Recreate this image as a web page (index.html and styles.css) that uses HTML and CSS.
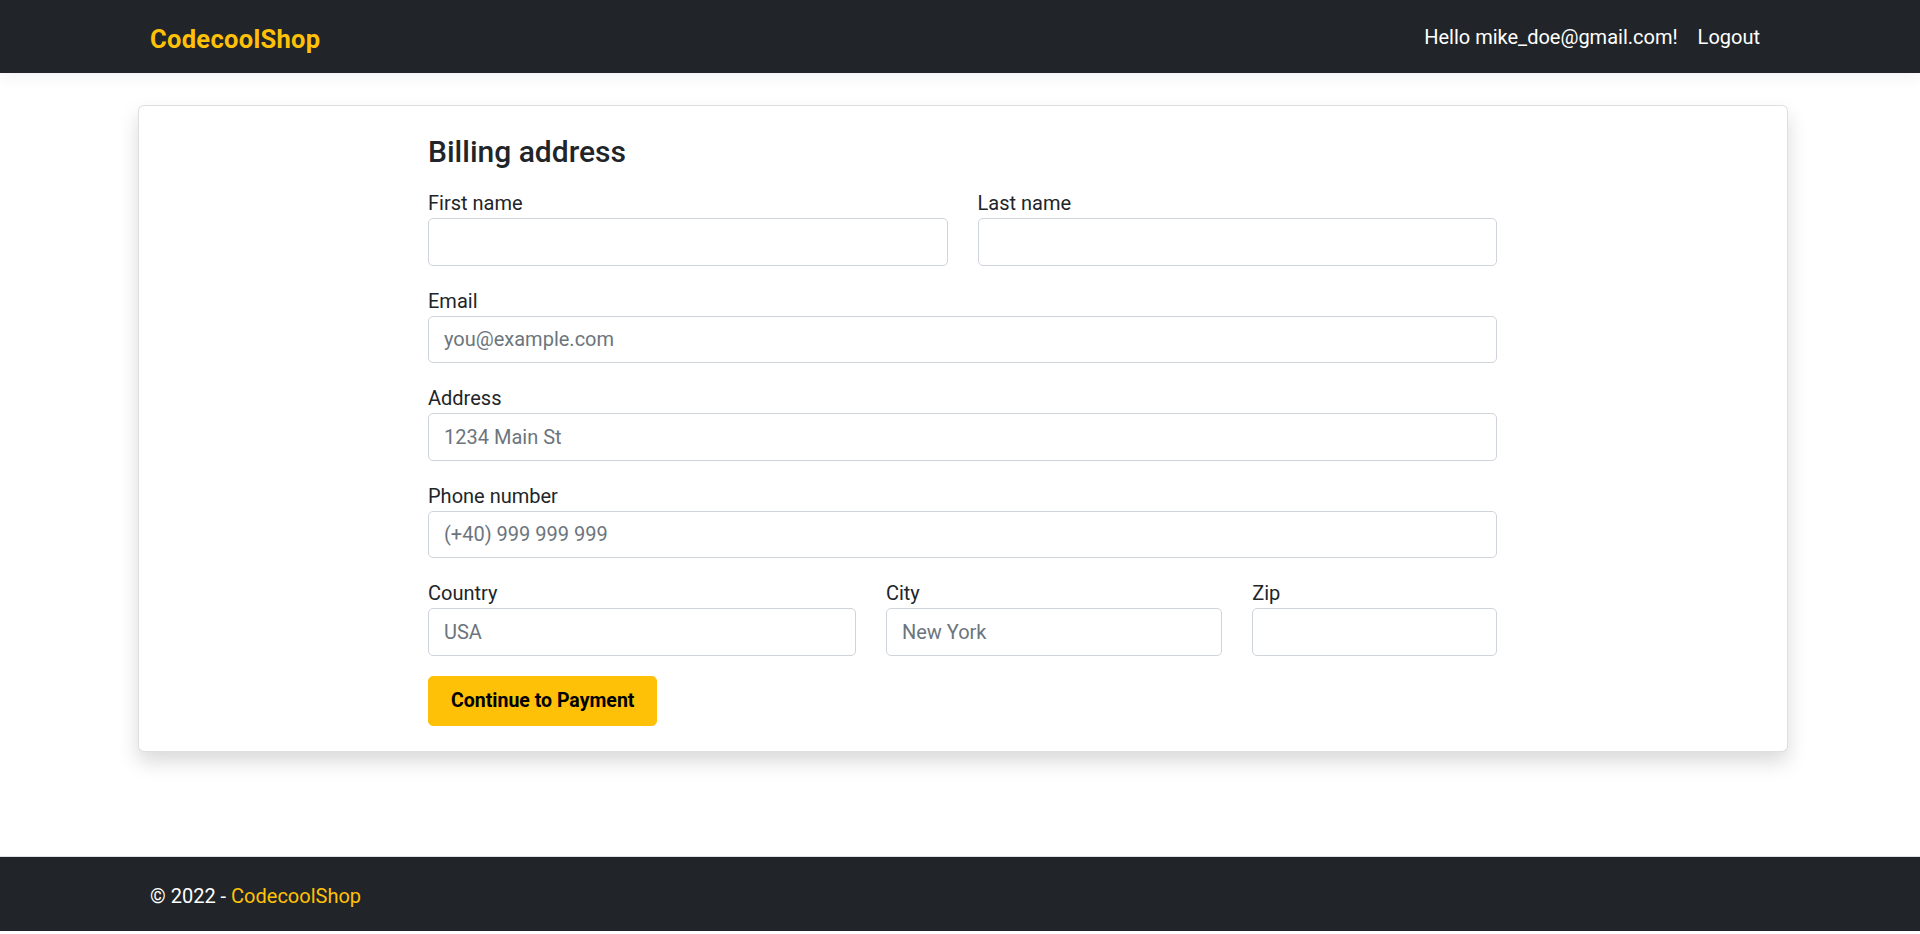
FILE: index.html
```html
<!DOCTYPE html>
<html lang="en">
<head>
<meta charset="utf-8">
<title>Checkout - CodecoolShop</title>
<link rel="stylesheet" href="styles.css">
</head>
<body>
<div class="page">
  <header class="navbar">
    <div class="nav-inner">
      <a class="brand" href="#">CodecoolShop</a>
      <nav class="nav-links">
        <span class="nav-link">Hello mike_doe@gmail.com!</span>
        <a class="nav-link" href="#">Logout</a>
      </nav>
    </div>
  </header>

  <main class="main">
    <div class="card">
      <form class="billing">
        <h4 class="title">Billing address</h4>
        <div class="row row-2">
          <div class="field">
            <label for="first">First name</label>
            <input id="first" class="control" type="text">
          </div>
          <div class="field">
            <label for="last">Last name</label>
            <input id="last" class="control" type="text">
          </div>
        </div>
        <div class="field">
          <label for="email">Email</label>
          <input id="email" class="control" type="email" placeholder="you@example.com">
        </div>
        <div class="field">
          <label for="address">Address</label>
          <input id="address" class="control" type="text" placeholder="1234 Main St">
        </div>
        <div class="field">
          <label for="phone">Phone number</label>
          <input id="phone" class="control" type="text" placeholder="(+40) 999 999 999">
        </div>
        <div class="row row-3">
          <div class="field">
            <label for="country">Country</label>
            <input id="country" class="control" type="text" placeholder="USA">
          </div>
          <div class="field">
            <label for="city">City</label>
            <input id="city" class="control" type="text" placeholder="New York">
          </div>
          <div class="field">
            <label for="zip">Zip</label>
            <input id="zip" class="control" type="text">
          </div>
        </div>
        <button class="btn" type="button">Continue to Payment</button>
      </form>
    </div>
  </main>

  <footer class="footer">
    <div class="footer-inner">&copy; 2022 - <a class="footer-link" href="#">CodecoolShop</a></div>
  </footer>
</div>
</body>
</html>
```

FILE: styles.css
```css
* {
  box-sizing: border-box;
}

html, body {
  margin: 0;
  padding: 0;
  background: #fff;
}

body {
  font-family: Roboto, "Liberation Sans", sans-serif;
  font-size: 20px;
  line-height: 1.5;
  color: #212529;
}

.page {
  min-height: 931px;
  display: flex;
  flex-direction: column;
}

/* Navbar */
.navbar {
  background: #212529;
  height: 73px;
  box-shadow: 0 5px 15px rgba(0, 0, 0, 0.05);
  position: relative;
  z-index: 1;
}

.nav-inner {
  width: 1620px;
  margin: 0 auto;
  height: 100%;
  display: flex;
  align-items: center;
  justify-content: space-between;
}

.brand {
  color: #ffc107;
  font-weight: 700;
  font-size: 25.5px;
  line-height: 1.5;
  text-decoration: none;
  padding-top: 5px;
  letter-spacing: 0.3px;
}

.nav-links {
  display: flex;
  align-items: center;
}

.nav-link {
  color: #fff;
  text-decoration: none;
  padding: 0 10px;
  font-size: 20px;
}

/* Main */
.main {
  flex: 1;
  padding-left: 5px;
}

.card {
  width: 1650px;
  margin: 32px auto 0;
  background: #fff;
  border: 1px solid rgba(0, 0, 0, 0.125);
  border-radius: 6px;
  box-shadow: 0 10px 20px rgba(0, 0, 0, 0.15);
  padding: 28px 0 25px;
}

.billing {
  width: 1069px;
  margin: 0 auto;
  display: flex;
  flex-direction: column;
}

.title {
  font-size: 30px;
  font-weight: 500;
  line-height: 36px;
  margin: 0 0 18px;
  color: #212529;
}

.row {
  display: grid;
  column-gap: 30px;
}

.row-2 {
  grid-template-columns: 1fr 1fr;
}

.row-3 {
  grid-template-columns: calc((100% + 30px) * 5 / 12 - 30px) calc((100% + 30px) * 4 / 12 - 30px) 1fr;
}

.field {
  display: flex;
  flex-direction: column;
  margin-bottom: 20px;
}

label {
  display: block;
  line-height: 30px;
  font-size: 20px;
  color: #212529;
}

.control {
  display: block;
  width: 100%;
  height: 47.5px;
  padding: 0 15px;
  font-family: inherit;
  font-size: 20px;
  color: #212529;
  background: #fff;
  border: 1px solid #ced4da;
  border-radius: 5px;
  outline: none;
}

.control::placeholder {
  color: #6c757d;
  opacity: 1;
}

.btn {
  align-self: flex-start;
  height: 50px;
  padding: 0 22px;
  background: #ffc107;
  color: #000;
  border: 1px solid #ffc107;
  border-radius: 5px;
  font-family: inherit;
  font-size: 19.5px;
  font-weight: 700;
  cursor: pointer;
}

/* Footer */
.footer {
  background: #212529;
  border-top: 1px solid #dee2e6;
  padding-top: 4px;
  line-height: 70px;
  color: #fff;
  font-size: 20px;
  white-space: nowrap;
}

.footer-inner {
  width: 1620px;
  margin: 0 auto;
}

.footer-link {
  color: #ffc107;
  text-decoration: none;
}
```
